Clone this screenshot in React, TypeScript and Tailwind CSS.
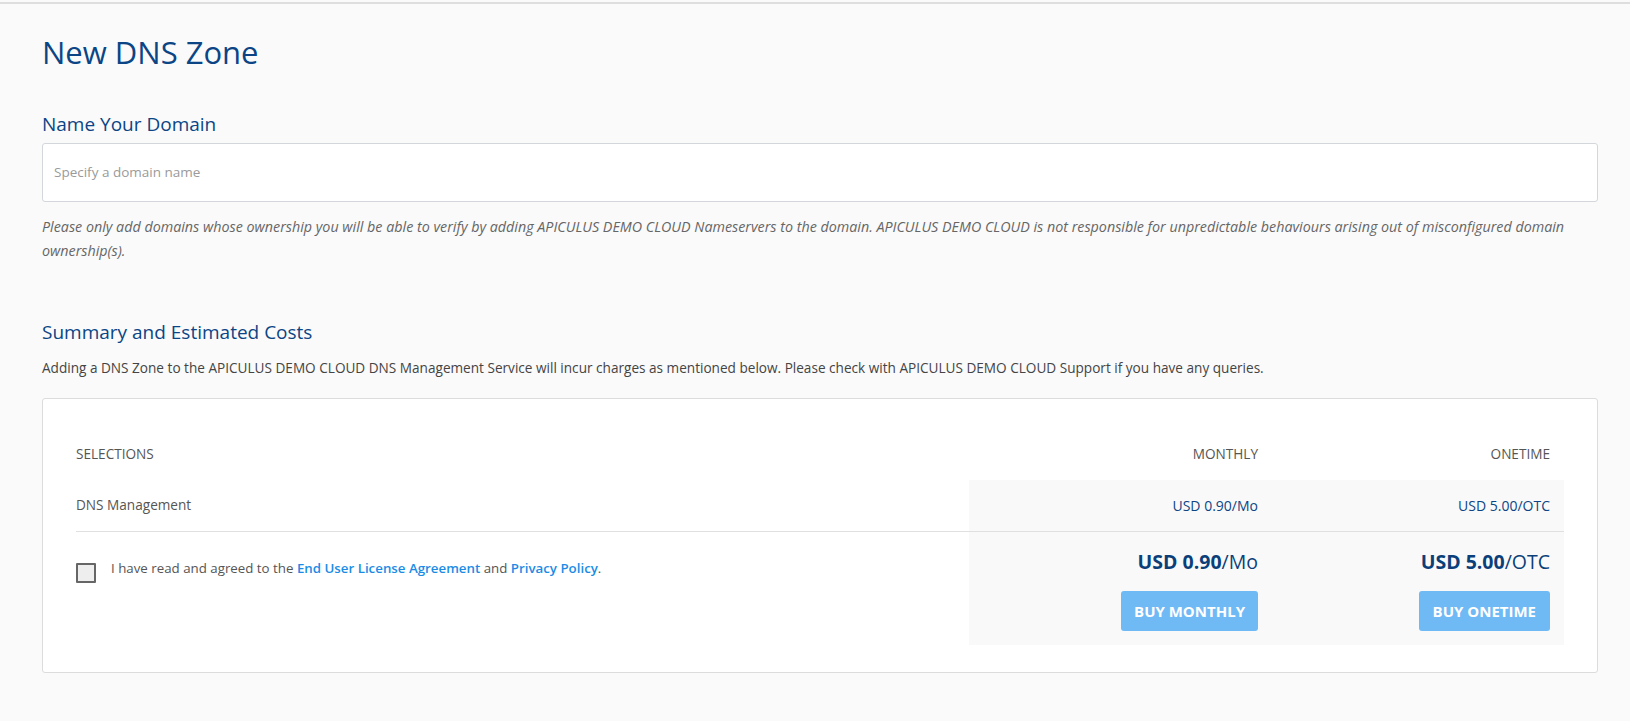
import React from "react";

const font = { fontFamily: '"Open Sans", "Noto Sans", sans-serif' };

export default function App() {
  return (
    <div className="min-h-[721px] bg-[#fafafa]" style={font}>
      <div className="pt-[2px]">
        <div className="h-[2px] bg-[#dedede]" />
      </div>
      <div className="pl-[42px] pr-[32px]">
        <h1 className="pt-[28px] text-[31px] leading-[40px] text-[#0b4585] font-normal">
          New DNS Zone
        </h1>

        <h2 className="mt-[40px] text-[19px] leading-[24px] text-[#0b4585]">
          Name Your Domain
        </h2>
        <div className="mt-[7px] h-[59px] bg-white border border-[#d3d7dc] rounded-[3px] flex items-center pl-[11px]">
          <span className="text-[13.5px] text-[#9a9a9a]">Specify a domain name</span>
        </div>
        <p className="mt-[13px] text-[14.3px] leading-[24px] italic text-[#666]">
          Please only add domains whose ownership you will be able to verify by adding APICULUS DEMO CLOUD
          Nameservers to the domain. APICULUS DEMO CLOUD is not responsible for unpredictable behaviours arising
          out of misconfigured domain ownership(s).
        </p>

        <h2 className="mt-[57px] text-[19px] leading-[24px] text-[#0b4585]">
          Summary and Estimated Costs
        </h2>
        <p className="mt-[14px] text-[13.6px] leading-[20px] text-[#444]">
          Adding a DNS Zone to the APICULUS DEMO CLOUD DNS Management Service will incur charges as mentioned
          below. Please check with APICULUS DEMO CLOUD Support if you have any queries.
        </p>

        <div className="mt-[20px] bg-white border border-[#dcdcdc] rounded-[3px] px-[33px] pt-[33px] pb-[27px]">
          <div className="grid grid-cols-[893px_303px_1fr] text-[13.6px] text-[#555]">
            {/* header */}
            <div className="h-[48px] flex items-center pb-[4px]">SELECTIONS</div>
            <div className="h-[48px] flex items-center justify-end pr-[14px] pb-[4px]">MONTHLY</div>
            <div className="h-[48px] flex items-center justify-end pr-[14px] pb-[4px]">ONETIME</div>

            {/* DNS row */}
            <div className="h-[52px] flex items-center border-b border-[#e0e0e0]">DNS Management</div>
            <div className="h-[52px] flex items-center justify-end pr-[14px] bg-[#f9f9f9] border-b border-[#e0e0e0] text-[#0b4585] text-[14px]">
              USD 0.90/Mo
            </div>
            <div className="h-[52px] flex items-center justify-end pr-[14px] bg-[#f9f9f9] border-b border-[#e0e0e0] text-[#0b4585] text-[14px]">
              USD 5.00/OTC
            </div>

            {/* agreement row */}
            <div className="pt-[26px] flex items-start">
              <div className="mt-[5px] w-[20px] h-[20px] border-2 border-[#666] bg-[#eeeeee] rounded-[1px] shrink-0" />
              <div className="ml-[15px] text-[13.3px] leading-[20px] text-[#555]">
                I have read and agreed to the{" "}
                <span className="text-[#1a8ce6] font-semibold">End User License Agreement</span> and{" "}
                <span className="text-[#1a8ce6] font-semibold">Privacy Policy</span>.
              </div>
            </div>
            <div className="bg-[#f9f9f9] pt-[16px] pb-[14px] pr-[14px] flex flex-col items-end">
              <div className="text-[19.5px] leading-[28px] text-[#0b3f7a]">
                <span className="font-bold">USD 0.90</span>/Mo
              </div>
              <button className="mt-[15px] h-[40px] px-[13px] bg-[#6fb9f5] text-white font-bold text-[15px] rounded-[3px]">
                BUY MONTHLY
              </button>
            </div>
            <div className="bg-[#f9f9f9] pt-[16px] pb-[14px] pr-[14px] flex flex-col items-end">
              <div className="text-[19.5px] leading-[28px] text-[#0b3f7a]">
                <span className="font-bold">USD 5.00</span>/OTC
              </div>
              <button className="mt-[15px] h-[40px] px-[14px] bg-[#6fb9f5] text-white font-bold text-[15px] rounded-[3px]">
                BUY ONETIME
              </button>
            </div>
          </div>
        </div>
      </div>
    </div>
  );
}
